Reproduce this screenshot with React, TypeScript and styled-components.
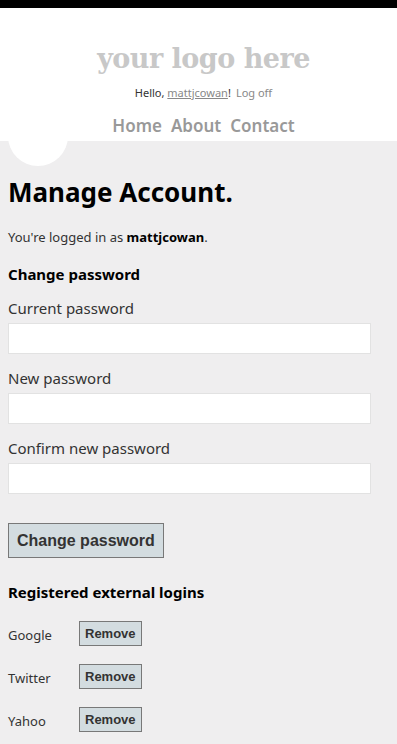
import React from 'react'
import styled, { createGlobalStyle } from 'styled-components'

const GlobalStyle = createGlobalStyle`
  html, body {
    margin: 0;
    padding: 0;
    background: #efeeef;
    font-family: "Segoe UI", "Noto Sans", sans-serif;
    color: #333;
  }
`

const TopBar = styled.div`
  height: 8px;
  background: #000;
`

const Header = styled.header`
  background: #fff;
  text-align: center;
  height: 133px;
  box-sizing: border-box;
  padding: 35px 0 0 10px;
`

const Logo = styled.p`
  margin: 0;
  font-family: "DejaVu Serif", "Liberation Serif", serif;
  font-weight: bold;
  font-size: 27px;
  line-height: 32px;
  color: #c8c8c8;
  letter-spacing: -0.5px;
`

const LoginLine = styled.div`
  margin-top: 10px;
  font-size: 11px;
  line-height: 16px;
  color: #333;

  a {
    color: #888;
    text-decoration: none;
  }
  a.user {
    text-decoration: underline;
  }
  .logoff {
    margin-left: 5px;
  }
`

const Nav = styled.nav`
  margin-top: 14px;
  display: flex;
  justify-content: center;
  gap: 9px;
  font-size: 17px;
  line-height: 22px;
  font-weight: 600;
`

const NavLink = styled.a`
  color: #999;
  text-decoration: none;
`

const Main = styled.main`
  position: relative;
  padding: 33px 8px 0;
`

const Accent = styled.div`
  position: absolute;
  left: 8px;
  top: -35px;
  width: 60px;
  height: 60px;
  border-radius: 50%;
  background: #fff;
`

const Title = styled.h1`
  position: relative;
  margin: 0;
  font-size: 26px;
  line-height: 36px;
  font-weight: bold;
  color: #000;
`

const Intro = styled.p`
  margin: 18px 0 0;
  font-size: 13px;
  line-height: 18px;

  strong {
    color: #000;
  }
`

const Section = styled.h3`
  margin: 18px 0 0;
  font-size: 15px;
  line-height: 20px;
  font-weight: bold;
  color: #000;
`

const Label = styled.label`
  display: block;
  margin-top: 14px;
  font-size: 15px;
  line-height: 20px;
  color: #333;
`

const Field = styled.input`
  display: block;
  box-sizing: border-box;
  margin-top: 5px;
  width: 363px;
  height: 31px;
  border: 1px solid #e2e2e2;
  background: #fff;
  outline: none;
`

const Button = styled.button<{ $small?: boolean }>`
  font-family: "Liberation Sans", Arial, sans-serif;
  font-weight: bold;
  color: #333;
  background: #d3dce0;
  border: 1px solid #787878;
  border-radius: 0;
  box-sizing: border-box;
  padding: ${(p) => (p.$small ? '0 5px' : '0 8px')};
  font-size: ${(p) => (p.$small ? '13px' : '16px')};
  height: ${(p) => (p.$small ? '25px' : '35px')};
  cursor: pointer;
`

const SubmitRow = styled.div`
  margin-top: 29px;
`

const LoginsTitle = styled(Section)`
  margin-top: 24px;
`

const LoginRows = styled.div`
  margin-top: 19px;
  display: flex;
  flex-direction: column;
  gap: 18px;
`

const LoginRow = styled.div`
  display: flex;
  align-items: center;
`

const Provider = styled.span`
  width: 71px;
  font-size: 13px;
  line-height: 18px;
  padding-top: 3px;
`

const providers = ['Google', 'Twitter', 'Yahoo']

export default function App() {
  return (
    <>
      <GlobalStyle />
      <TopBar />
      <Header>
        <Logo>your logo here</Logo>
        <LoginLine>
          Hello, <a className="user" href="#">mattjcowan</a>!
          <a className="logoff" href="#">Log off</a>
        </LoginLine>
        <Nav>
          <NavLink href="#">Home</NavLink>
          <NavLink href="#">About</NavLink>
          <NavLink href="#">Contact</NavLink>
        </Nav>
      </Header>
      <Main>
        <Accent />
        <Title>Manage Account.</Title>
        <Intro>
          You're logged in as <strong>mattjcowan</strong>.
        </Intro>
        <Section>Change password</Section>
        <Label>Current password</Label>
        <Field type="password" />
        <Label>New password</Label>
        <Field type="password" />
        <Label>Confirm new password</Label>
        <Field type="password" />
        <SubmitRow>
          <Button>Change password</Button>
        </SubmitRow>
        <LoginsTitle>Registered external logins</LoginsTitle>
        <LoginRows>
          {providers.map((name) => (
            <LoginRow key={name}>
              <Provider>{name}</Provider>
              <Button $small>Remove</Button>
            </LoginRow>
          ))}
        </LoginRows>
      </Main>
    </>
  )
}
